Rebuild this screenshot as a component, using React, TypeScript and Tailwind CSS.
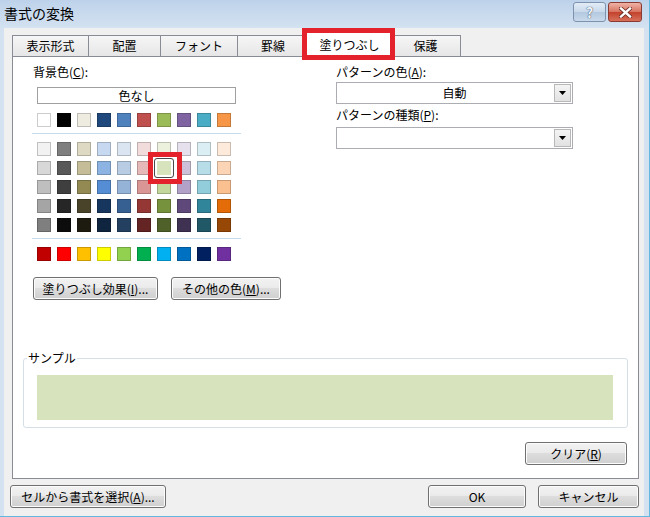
import type { ReactNode } from 'react'

const themeRow = ['#ffffff', '#000000', '#eeece1', '#1f497d', '#4f81bd', '#c0504d', '#9bbb59', '#8064a2', '#4bacc6', '#f79646']

const tintRows = [
  ['#f2f2f2', '#7f7f7f', '#ddd9c3', '#c6d9f0', '#dbe5f1', '#f2dcdb', '#ebf1dd', '#e5e0ec', '#dbeef3', '#fdeada'],
  ['#d8d8d8', '#595959', '#c4bd97', '#8db3e2', '#b8cce4', '#e5b9b7', '#d7e3bc', '#ccc1d9', '#b7dde8', '#fbd5b5'],
  ['#bfbfbf', '#3f3f3f', '#938953', '#548dd4', '#95b3d7', '#d99694', '#c3d69b', '#b2a2c7', '#92cddc', '#fac08f'],
  ['#a5a5a5', '#262626', '#494429', '#17365d', '#366092', '#953734', '#76923c', '#5f497a', '#31859b', '#e36c09'],
  ['#7f7f7f', '#0c0c0c', '#1d1b10', '#0f243e', '#244061', '#632423', '#4f6128', '#3f3151', '#205867', '#974806'],
]

const standardRow = ['#c00000', '#ff0000', '#ffc000', '#ffff00', '#92d050', '#00b050', '#00b0f0', '#0070c0', '#002060', '#7030a0']

const tabs = [
  { label: '表示形式', w: 'w-[77px]' },
  { label: '配置', w: 'w-[73px]' },
  { label: 'フォント', w: 'w-[78px]' },
  { label: '罫線', w: 'w-[72px]' },
  { label: '塗りつぶし', w: 'w-[87px]', active: true },
  { label: '保護', w: 'w-[71px]' },
]

function Swatch({ color, selected }: { color: string; selected?: boolean }) {
  if (selected) {
    return (
      <div className="relative w-[14px] h-[14px]">
        <div
          className="absolute -left-[3px] -top-[3px] w-[20px] h-[20px] rounded-[3px] border border-[#4a4a4a] shadow-[inset_0_0_0_2px_#ffffff]"
          style={{ backgroundColor: color }}
        />
        <div className="absolute -left-[9px] -top-[9px] w-[34px] h-[32px] border-[5px] border-[#e3222b]" />
      </div>
    )
  }
  return <div className="w-[14px] h-[14px] border border-black/20" style={{ backgroundColor: color }} />
}

function SwatchRow({ colors, selectedIndex }: { colors: string[]; selectedIndex?: number }) {
  return (
    <div className="flex gap-[6px] ml-[4px]">
      {colors.map((c, i) => (
        <Swatch key={i} color={c} selected={i === selectedIndex} />
      ))}
    </div>
  )
}

function Btn({ children, className = '' }: { children: ReactNode; className?: string }) {
  return (
    <div
      className={`h-[23px] flex items-center justify-center rounded-[3px] border border-[#707070] bg-[linear-gradient(#f2f2f2,#ebebeb_45%,#dddddd_50%,#cfcfcf)] shadow-[inset_0_0_0_1px_#fcfcfc] text-[12px] text-black ${className}`}
    >
      {children}
    </div>
  )
}

function Select({ value }: { value?: string }) {
  return (
    <div className="flex h-[22px] w-[237px] border border-[#abadb3] bg-white">
      <div className="flex-1 flex items-center justify-center pl-[18px] text-[12px]">{value}</div>
      <div className="my-[1px] mr-[1px] w-[17px] flex items-center justify-center border border-[#b8b8b8] bg-[linear-gradient(#f4f4f4,#e2e2e2)]">
        <svg width="7" height="4" viewBox="0 0 7 4">
          <path d="M0 0H7L3.5 4Z" fill="#000" />
        </svg>
      </div>
    </div>
  )
}

export default function App() {
  return (
    <div className="w-[650px] h-[517px] flex flex-col bg-[#d3e1f0] border-r border-b border-[#62b8df] font-['Meiryo_UI','Noto_Sans_CJK_JP','Noto_Sans',sans-serif] text-black overflow-hidden">
      {/* title bar */}
      <div className="h-[28px] flex items-start bg-[linear-gradient(#bdd2ea,#d4e2f1)]">
        <div className="ml-[4px] mt-[3px] text-[14px] leading-[20px]">書式の変換</div>
        <div className="ml-auto mr-[7px] mt-[2px] flex gap-[2px]">
          <div className="w-[33px] h-[20px] rounded-[3px] border border-[#7d93ad] bg-[linear-gradient(#e3ecf6,#c8d8ea_50%,#b3c8df_51%,#c9d9ea)] flex items-center justify-center text-[14px] font-bold leading-none text-[#eef3f9] [text-shadow:0_0_1px_#44546a,0_0_1px_#44546a]">
            ?
          </div>
          <div className="w-[34px] h-[20px] rounded-[3px] border border-[#8a3a30] bg-[linear-gradient(#eeb3a6,#d8725f_50%,#c3422d_51%,#d7705a)] flex items-center justify-center">
            <svg width="13" height="11" viewBox="0 0 13 11">
              <path d="M2 1.5L11 9.5M11 1.5L2 9.5" stroke="#6b2a22" strokeWidth="4" strokeLinecap="square" />
              <path d="M2 1.5L11 9.5M11 1.5L2 9.5" stroke="#ffffff" strokeWidth="2.4" strokeLinecap="square" />
            </svg>
          </div>
        </div>
      </div>

      {/* body */}
      <div className="flex-1 ml-[4px] mr-[5px] bg-[#f0f0f0] flex flex-col pt-[4px]">
        {/* tabs */}
        <div className="relative z-10 -mb-px ml-[8px] flex items-end h-[25px]">
          {tabs.map((t, i) =>
            t.active ? (
              <div
                key={t.label}
                className={`relative ${t.w} h-[25px] -ml-[3px] -mr-[2px] border-t border-l border-r border-[#898c95] bg-white flex items-center justify-center text-[12px] z-10`}
              >
                {t.label}
                <div className="absolute -left-[5px] -top-[5px] -right-[3px] -bottom-[3px] border-[5px] border-[#e3222b]" />
              </div>
            ) : (
              <div
                key={t.label}
                className={`${t.w} h-[21px] mb-px ${i === 0 ? '' : '-ml-px'} border-t border-l border-r border-[#898c95] bg-[linear-gradient(#f6f6f6,#e6e6e6)] flex items-center justify-center text-[12px]`}
              >
                {t.label}
              </div>
            )
          )}
        </div>

        {/* panel */}
        <div className="ml-[8px] w-[627px] h-[423px] border border-[#898c95] bg-white flex flex-col">
          <div className="flex pl-[20px] pt-[7px]">
            {/* background colours */}
            <div className="w-[303px] flex flex-col">
              <div className="h-[16px] text-[12px] leading-[16px]">
                背景色(<u>C</u>):
              </div>
              <div className="mt-[7px] ml-[4px] w-[199px] h-[17px] border border-[#a0a0a0] flex items-center justify-center text-[12px]">
                色なし
              </div>
              <div className="mt-[9px]">
                <SwatchRow colors={themeRow} />
              </div>
              <div className="mt-[6px] -ml-[1px] w-[209px] h-px bg-[#c6dbee]" />
              <div className="mt-[8px] flex flex-col gap-[5px]">
                {tintRows.map((row, r) => (
                  <SwatchRow key={r} colors={row} selectedIndex={r === 1 ? 6 : undefined} />
                ))}
              </div>
              <div className="mt-[6px] -ml-[1px] w-[209px] h-px bg-[#c6dbee]" />
              <div className="mt-[8px]">
                <SwatchRow colors={standardRow} />
              </div>
              <div className="mt-[16px] flex gap-[13px]">
                <Btn className="w-[125px]">
                  塗りつぶし効果(<u>I</u>)...
                </Btn>
                <Btn className="w-[110px]">
                  その他の色(<u>M</u>)...
                </Btn>
              </div>
            </div>

            {/* pattern */}
            <div className="flex flex-col">
              <div className="h-[16px] text-[12px] leading-[16px]">
                パターンの色(<u>A</u>):
              </div>
              <div className="mt-[2px]">
                <Select value="自動" />
              </div>
              <div className="mt-[3px] h-[16px] text-[12px] leading-[16px]">
                パターンの種類(<u>P</u>):
              </div>
              <div className="mt-[4px]">
                <Select />
              </div>
            </div>
          </div>

          {/* sample */}
          <fieldset className="mt-[50px] ml-[10px] w-[605px] border border-[#d5dfe5] rounded-[3px] pl-[3px] pb-[7px]">
            <legend className="px-[1px] text-[12px] leading-[16px]">サンプル</legend>
            <div className="mt-[9px] ml-[10px] w-[576px] h-[45px] bg-[#d7e3bc]" />
          </fieldset>

          <div className="mt-[14px] self-end mr-[11px]">
            <Btn className="w-[102px]">
              クリア(<u>R</u>)
            </Btn>
          </div>
        </div>

        {/* bottom buttons */}
        <div className="mt-[6px] flex items-center pl-[6px] pr-[5px]">
          <Btn className="w-[156px]">
            セルから書式を選択(<u>A</u>)...
          </Btn>
          <Btn className="ml-auto w-[98px] border-[#3c7fb1] shadow-[inset_0_0_0_1px_#fcfcfc,inset_0_0_0_2px_#c0e4f8]">OK</Btn>
          <Btn className="ml-[12px] w-[101px]">キャンセル</Btn>
        </div>
      </div>
    </div>
  )
}
